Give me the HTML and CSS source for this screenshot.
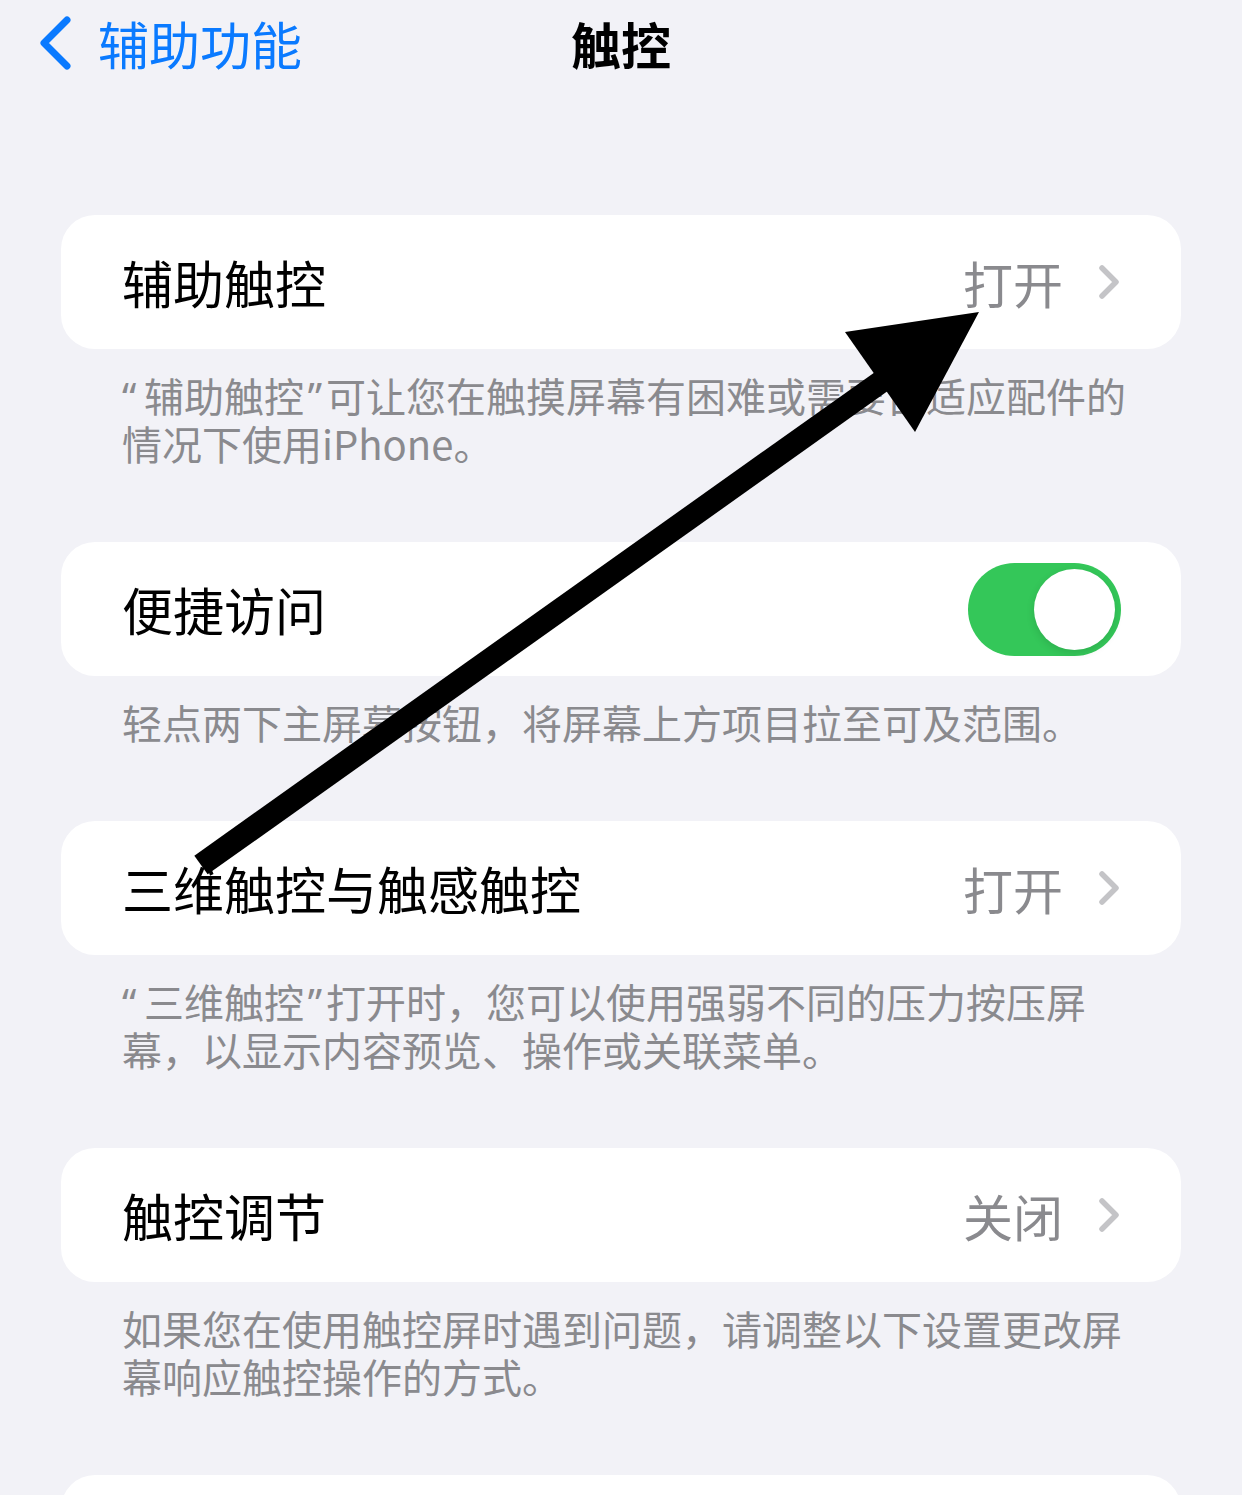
FILE: index.html
```html
<!DOCTYPE html>
<html lang="zh-CN">
<head>
<meta charset="utf-8">
<title>触控</title>
<link rel="stylesheet" href="styles.css">
</head>
<body>
<div class="page">
  <header class="nav">
    <div class="back">
      <svg class="back-chev" width="34" height="56" viewBox="0 0 34 56"><polyline points="29,5 6,28 29,51" fill="none" stroke="#0a7aff" stroke-width="7" stroke-linecap="round" stroke-linejoin="round"/></svg>
      <span class="back-text">辅助功能</span>
    </div>
    <div class="title">触控</div>
    <div></div>
  </header>

  <main class="list">
    <section class="group">
      <div class="card">
        <span class="label">辅助触控</span>
        <span class="value">打开</span>
        <svg class="chev" width="22" height="36" viewBox="0 0 22 36"><polyline points="4,4 18,18 4,32" fill="none" stroke="#c4c4c7" stroke-width="5.5" stroke-linecap="round" stroke-linejoin="round"/></svg>
      </div>
      <p class="footer"><span class="q q-open">“</span>辅助触控<span class="q q-close">”</span>可让您在触摸屏幕有困难或需要自适应配件的<br>情况下使用iPhone。</p>
    </section>

    <section class="group">
      <div class="card card-toggle">
        <span class="label">便捷访问</span>
        <span class="switch"><span class="knob"></span></span>
      </div>
      <p class="footer">轻点两下主屏幕按钮，将屏幕上方项目拉至可及范围。</p>
    </section>

    <section class="group">
      <div class="card">
        <span class="label">三维触控与触感触控</span>
        <span class="value">打开</span>
        <svg class="chev" width="22" height="36" viewBox="0 0 22 36"><polyline points="4,4 18,18 4,32" fill="none" stroke="#c4c4c7" stroke-width="5.5" stroke-linecap="round" stroke-linejoin="round"/></svg>
      </div>
      <p class="footer"><span class="q q-open">“</span>三维触控<span class="q q-close">”</span>打开时，您可以使用强弱不同的压力按压屏<br>幕，以显示内容预览、操作或关联菜单。</p>
    </section>

    <section class="group">
      <div class="card">
        <span class="label">触控调节</span>
        <span class="value">关闭</span>
        <svg class="chev" width="22" height="36" viewBox="0 0 22 36"><polyline points="4,4 18,18 4,32" fill="none" stroke="#c4c4c7" stroke-width="5.5" stroke-linecap="round" stroke-linejoin="round"/></svg>
      </div>
      <p class="footer">如果您在使用触控屏时遇到问题，请调整以下设置更改屏<br>幕响应触控操作的方式。</p>
    </section>

    <section class="group">
      <div class="card"></div>
    </section>
  </main>

  <svg class="arrow" width="1242" height="1495" viewBox="0 0 1242 1495">
    <line x1="201" y1="865" x2="892" y2="374" stroke="#000" stroke-width="23"/>
    <polygon points="845,332 979,312 915,432" fill="#000"/>
  </svg>
</div>
</body>
</html>
```
FILE: styles.css
```css
html, body {
  margin: 0;
  padding: 0;
  background: #f2f2f7;
}
body {
  font-family: "Noto Sans CJK SC", "Noto Sans", sans-serif;
  color: #000;
}
.page {
  position: relative;
  width: 1242px;
  height: 1495px;
  overflow: hidden;
}
.nav {
  display: grid;
  grid-template-columns: 1fr auto 1fr;
  align-items: center;
  height: 86px;
}
.back {
  display: flex;
  align-items: center;
  padding-left: 38px;
  gap: 26px;
}
.back-chev {
  display: block;
}
.back-text {
  font-size: 51px;
  line-height: 60px;
  color: #0a7aff;
}
.title {
  font-size: 50px;
  line-height: 60px;
  font-weight: 700;
}
.list {
  padding: 129px 61px 0 61px;
}
.card {
  display: flex;
  align-items: center;
  height: 134px;
  background: #fff;
  border-radius: 34px;
  padding: 0 61px;
}
.card-toggle {
  padding-right: 60px;
}
.label {
  font-size: 51px;
  line-height: 60px;
  flex: 1;
}
.value {
  font-size: 50px;
  line-height: 60px;
  color: #8a8a8e;
  margin-right: 35px;
}
.chev {
  display: block;
}
.footer {
  margin: 0;
  padding: 22px 40px 75px 61px;
  font-size: 40px;
  line-height: 48px;
  color: #8a8a8e;
  white-space: nowrap;
}
.q {
  display: inline-block;
  vertical-align: top;
  width: 22px;
  height: 48px;
  line-height: 52px;
  font-family: "Noto Sans", "Liberation Sans", sans-serif;
}
.q-open {
  text-align: left;
}
.q-close {
  text-align: center;
}
.switch {
  display: flex;
  justify-content: flex-end;
  align-items: center;
  width: 153px;
  height: 93px;
  border-radius: 47px;
  background: #34c759;
  padding: 0 6px;
  box-sizing: border-box;
}
.knob {
  width: 81px;
  height: 81px;
  border-radius: 50%;
  background: #fff;
  box-shadow: 0 3px 8px rgba(0, 0, 0, 0.12);
}
.arrow {
  position: absolute;
  top: 0;
  left: 0;
  pointer-events: none;
}
```
